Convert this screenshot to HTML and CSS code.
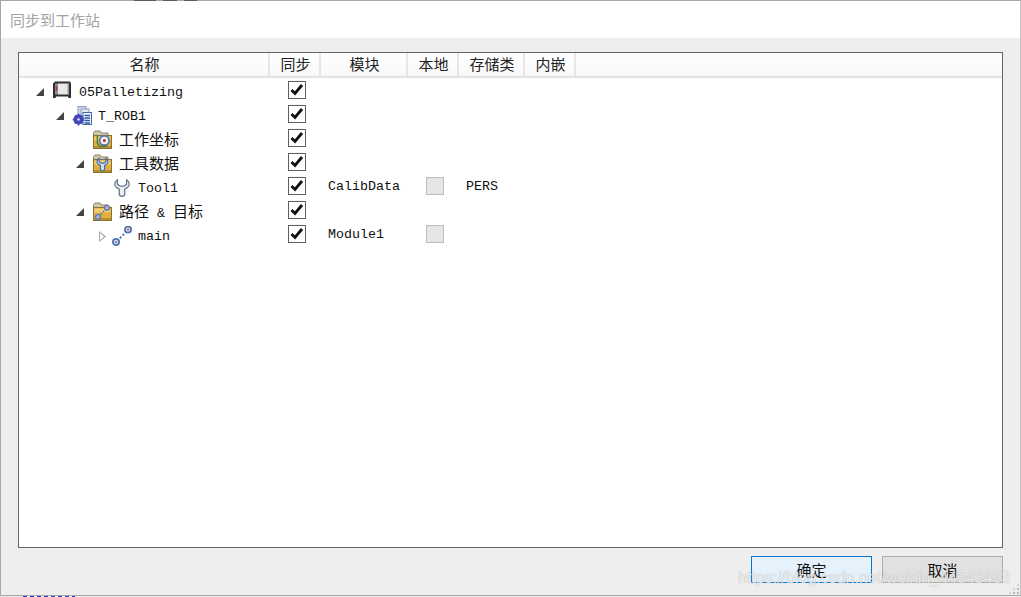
FILE: index.html
```html
<!DOCTYPE html>
<html lang="zh-CN">
<head>
    <meta charset="UTF-8">
    <title>同步到工作站</title>
    <link rel="stylesheet" href="styles.css">
</head>
<body>
    <svg class="defs" width="0" height="0">
        <symbol id="check" viewBox="0 0 16 16">
            <path d="M2.5 8 L6 11.5 L13 3" fill="none" stroke="#111" stroke-width="2.8"/>
        </symbol>
        <symbol id="folder" viewBox="0 0 20 20">
            <path d="M1.5 18.5 V2.5 L3 1 H8 L9.5 3 H16 V6 H18.5 V18.5 Z" fill="#cfc7ac" stroke="#8d8263"/>
            <rect x="1.5" y="5.5" width="18" height="13" fill="#e2ae3c" stroke="#8a7136"/>
            <rect x="2.5" y="6.5" width="16" height="4" fill="#f0cf72"/>
            <rect x="2" y="16" width="17" height="2" fill="#b98c2c"/>
        </symbol>
        <symbol id="wrench" viewBox="0 0 22 20">
            <path d="M6 1 C2.5 3 2 8 5 9.5 C6.5 10.5 8 10.5 8 11.5 V17 C8 20 14 20 14 17 V11.5 C14 10.5 15.5 10.5 17 9.5 C20 8 19.5 3 16 1 V6 L13 8 H9 L6 6 Z" fill="#eaeff5" stroke="#64748c" stroke-width="1.4"/>
        </symbol>
        <symbol id="folder-wrench" viewBox="0 0 22 20">
            <path d="M6 1 C2.5 3 2 8 5 9.5 C6.5 10.5 8 10.5 8 11.5 V17 C8 20 14 20 14 17 V11.5 C14 10.5 15.5 10.5 17 9.5 C20 8 19.5 3 16 1 V6 L13 8 H9 L6 6 Z" fill="#d5e2f4" stroke="#3f6eb0" stroke-width="1.8"/>
        </symbol>
        <symbol id="path" viewBox="0 0 20 20">
            <path d="M5 15 L15 5" stroke="#4a76b8" stroke-width="2" stroke-dasharray="2 2"/>
            <circle cx="4" cy="16" r="3.1" fill="#d2def0" stroke="#4a76b8" stroke-width="1.8"/>
            <circle cx="16" cy="3.5" r="3.1" fill="#e9d5d6" stroke="#4a76b8" stroke-width="1.8"/>
            <circle cx="4" cy="16" r="1" fill="#b8575a"/>
            <circle cx="16" cy="3.5" r="1" fill="#b8575a"/>
        </symbol>
    </svg>

    <div class="top-bleed">
        <span class="bleed-a"></span><span class="bleed-b"></span><span class="bleed-c"></span>
    </div>
    <div class="bottom-bleed"></div>

    <div class="dialog">
        <div class="dialog-title">同步到工作站</div>

        <div class="dialog-body">
            <div class="tree-table">
                <div class="table-row table-head">
                    <div class="head-cell">名称</div>
                    <div class="head-cell">同步</div>
                    <div class="head-cell">模块</div>
                    <div class="head-cell">本地</div>
                    <div class="head-cell">存储类</div>
                    <div class="head-cell">内嵌</div>
                </div>

                <div class="table-row">
                    <div class="name-cell level-0">
                        <span class="toggle open"></span>
                        <svg class="node-icon safe-icon" viewBox="0 0 20 20">
                            <path d="M1 17 V2.5 L3 0.5 H18 L19 2.5 V17 H16.5 L16 15.5 H4 L3.5 17 Z" fill="#2e2e2e"/>
                            <rect x="6" y="2.5" width="11" height="11" fill="#e8e8e8"/>
                            <rect x="15.5" y="2.5" width="1.5" height="11" fill="#9a9a9a"/>
                            <rect x="3" y="2.5" width="3" height="11" fill="#8c8c8c"/>
                            <rect x="3.8" y="5.5" width="1.4" height="4" fill="#b02a2a"/>
                        </svg>
                        <span class="label">05Palletizing</span>
                    </div>
                    <div class="check-cell"><span class="check"><svg><use href="#check"/></svg></span></div>
                </div>

                <div class="table-row">
                    <div class="name-cell level-1">
                        <span class="toggle open"></span>
                        <svg class="node-icon" viewBox="0 0 20 20">
                            <rect x="6" y="0.5" width="8" height="10" fill="#cfd9ea" stroke="#8b9dbb"/>
                            <rect x="9" y="3" width="8" height="10" fill="#dfe6f2" stroke="#8b9dbb"/>
                            <rect x="11" y="6.5" width="8.5" height="12" fill="#f4f7fb" stroke="#3f68a8"/>
                            <path d="M12.5 9.5 H18 M12.5 12 H18 M12.5 14.5 H18 M12.5 17 H18" stroke="#2d5aa0" stroke-width="1.3"/>
                            <circle cx="6.5" cy="13.5" r="3.6" fill="none" stroke="#4347b5" stroke-width="2.8"/>
                            <path d="M6.5 7.8 V19.5 M0.8 13.5 H12.2 M2.7 9.7 L10.3 17.3 M10.3 9.7 L2.7 17.3" stroke="#4347b5" stroke-width="1.8"/>
                            <circle cx="6.5" cy="13.5" r="1.3" fill="#d8dcf2"/>
                        </svg>
                        <span class="label tight">T_ROB1</span>
                    </div>
                    <div class="check-cell"><span class="check"><svg><use href="#check"/></svg></span></div>
                </div>

                <div class="table-row">
                    <div class="name-cell level-2">
                        <span class="toggle"></span>
                        <span class="folder-icon">
                            <svg class="node-icon"><use href="#folder"/></svg>
                            <svg class="folder-badge" viewBox="0 0 16 14">
                                <circle cx="10" cy="7" r="5" fill="#f2f2f2" stroke="#5579ad" stroke-width="1.8"/>
                                <circle cx="10" cy="7" r="1.7" fill="#b33a3a"/>
                                <path d="M2.5 2 V10 L5 13 H13" fill="none" stroke="#3f7f3f" stroke-width="1.5"/>
                            </svg>
                        </span>
                        <span class="label cjk">工作坐标</span>
                    </div>
                    <div class="check-cell"><span class="check"><svg><use href="#check"/></svg></span></div>
                </div>

                <div class="table-row">
                    <div class="name-cell level-2">
                        <span class="toggle open"></span>
                        <span class="folder-icon">
                            <svg class="node-icon"><use href="#folder"/></svg>
                            <svg class="folder-badge"><use href="#folder-wrench"/></svg>
                        </span>
                        <span class="label cjk">工具数据</span>
                    </div>
                    <div class="check-cell"><span class="check"><svg><use href="#check"/></svg></span></div>
                </div>

                <div class="table-row">
                    <div class="name-cell level-3">
                        <span class="toggle"></span>
                        <svg class="node-icon"><use href="#wrench"/></svg>
                        <span class="label tight">Tool1</span>
                    </div>
                    <div class="check-cell"><span class="check"><svg><use href="#check"/></svg></span></div>
                    <div class="text-cell">CalibData</div>
                    <div class="check-cell"><span class="check disabled"></span></div>
                    <div class="text-cell">PERS</div>
                </div>

                <div class="table-row">
                    <div class="name-cell level-2">
                        <span class="toggle open"></span>
                        <span class="folder-icon">
                            <svg class="node-icon"><use href="#folder"/></svg>
                            <svg class="folder-badge"><use href="#path"/></svg>
                        </span>
                        <span class="label mixed"><span class="cjk">路径</span> &amp; <span class="cjk">目标</span></span>
                    </div>
                    <div class="check-cell"><span class="check"><svg><use href="#check"/></svg></span></div>
                </div>

                <div class="table-row">
                    <div class="name-cell level-3">
                        <span class="toggle closed"></span>
                        <svg class="node-icon"><use href="#path"/></svg>
                        <span class="label tight">main</span>
                    </div>
                    <div class="check-cell"><span class="check"><svg><use href="#check"/></svg></span></div>
                    <div class="text-cell">Module1</div>
                    <div class="check-cell"><span class="check disabled"></span></div>
                    <div class="text-cell"></div>
                </div>
            </div>

            <div class="dialog-footer">
                <button class="btn btn-default">确定</button>
                <button class="btn">取消</button>
            </div>
        </div>

        <span class="grip"></span>
        <div class="watermark">https://blog.csdn.net/weixin_44543463</div>
    </div>
</body>
</html>
```

FILE: styles.css
```css
* {
    box-sizing: border-box;
}

body {
    margin: 0;
    width: 1021px;
    height: 597px;
    overflow: hidden;
    position: relative;
    background-color: #eeeeee;
    font-family: 'Liberation Mono', 'Noto Sans CJK SC', monospace;
    font-size: 13.33px;
    color: #111;
}

.defs {
    position: absolute;
}

.top-bleed span {
    position: absolute;
    top: 0;
    height: 1px;
    background-color: #5a5a5a;
    z-index: 2;
}

.bleed-a { left: 134px; width: 22px; }
.bleed-b { left: 163px; width: 14px; }
.bleed-c { left: 184px; width: 13px; }

.bottom-bleed {
    position: absolute;
    left: 23px;
    bottom: 0;
    width: 52px;
    height: 1px;
    background: repeating-linear-gradient(90deg, #2a3fd0 0 4px, #ffffff 4px 7px);
    z-index: 2;
}

.dialog {
    position: relative;
    display: flex;
    flex-direction: column;
    width: 1021px;
    height: 596px;
    border: 1px solid #a6a6a6;
    border-right-color: #c4c4c4;
}

.dialog-title {
    height: 37px;
    flex-shrink: 0;
    padding-left: 9px;
    line-height: 37px;
    background-color: white;
    color: #a3a3a3;
    font-family: 'Noto Sans CJK SC', sans-serif;
    font-size: 15px;
}

.dialog-body {
    flex: 1;
    display: flex;
    flex-direction: column;
    padding: 14px 17px 0;
}

.tree-table {
    height: 496px;
    border: 1px solid #646464;
    background-color: white;
}

.table-row {
    display: grid;
    grid-template-columns: 251px 51px 87px 51px 66px 51px;
    height: 24px;
    align-items: center;
}

.table-head {
    height: 25px;
    border-bottom: 2px solid #e3e3e3;
    background: linear-gradient(#ffffff, #f8f8f8);
    align-items: stretch;
}

.head-cell {
    border-right: 2px solid #e6e6e6;
    padding-left: 2px;
    line-height: 22px;
    text-align: center;
    font-family: 'Noto Sans CJK SC', sans-serif;
    font-size: 15px;
    color: #222;
}

.name-cell {
    display: flex;
    align-items: center;
    padding-top: 4px;
}

.level-0 { padding-left: 17px; }
.level-1 { padding-left: 37px; }
.level-2 { padding-left: 57px; }
.level-3 { padding-left: 77px; }

.toggle {
    position: relative;
    width: 16px;
    height: 16px;
    flex-shrink: 0;
}

.toggle.open::after {
    content: "";
    position: absolute;
    left: 0;
    top: 4px;
    width: 0;
    height: 0;
    border-bottom: 8px solid #444;
    border-left: 8px solid transparent;
}

.toggle.closed::after {
    content: "";
    position: absolute;
    left: 3px;
    top: 3px;
    width: 7px;
    height: 11px;
    background-color: #a6a6a6;
    clip-path: polygon(0 0, 100% 50%, 0 100%, 0 0, 1px 2px, 1px 9px, 5px 50%, 1px 2px);
}

.node-icon {
    display: block;
    width: 20px;
    height: 20px;
    flex-shrink: 0;
}

.safe-icon {
    margin-top: -3px;
}

.folder-icon {
    position: relative;
    width: 20px;
    height: 20px;
    flex-shrink: 0;
}

.folder-badge {
    position: absolute;
    left: 3px;
    top: 3px;
    width: 15px;
    height: 15px;
}

.label {
    margin-left: 7px;
    white-space: nowrap;
}

.label.tight {
    margin-left: 6px;
}

.label.cjk,
.label.mixed {
    margin-top: -4px;
}

.cjk {
    font-family: 'Noto Sans CJK SC', sans-serif;
    font-size: 15px;
}

.check-cell {
    display: flex;
    justify-content: center;
    padding-left: 3px;
}

.check {
    display: block;
    width: 18px;
    height: 18px;
    border: 1px solid #5f5f5f;
    background-color: white;
}

.check svg {
    display: block;
    width: 16px;
    height: 16px;
}

.check.disabled {
    border-color: #bcbcbc;
    background-color: #e6e6e6;
}

.text-cell {
    padding-left: 7px;
    white-space: nowrap;
}

.dialog-footer {
    display: flex;
    justify-content: flex-end;
    gap: 10px;
    margin-top: 8px;
}

.btn {
    width: 121px;
    height: 27px;
    padding: 0;
    border: 1px solid #adadad;
    background-color: #e1e1e1;
    font-family: 'Noto Sans CJK SC', sans-serif;
    font-size: 15px;
    color: #111;
}

.btn-default {
    border-color: #0078d7;
    background-color: #e5f1fb;
}

.grip {
    position: absolute;
    right: 1px;
    bottom: 1px;
    width: 10px;
    height: 10px;
    background-image: radial-gradient(circle at 1px 1px, #b5b5b5 1px, transparent 1.2px);
    background-size: 4px 4px;
    clip-path: polygon(100% 0, 100% 100%, 0 100%);
}

.watermark {
    position: absolute;
    left: 737px;
    top: 568px;
    font-family: 'Liberation Sans', sans-serif;
    font-size: 16px;
    color: rgba(255, 255, 255, 0.75);
    text-shadow: 0 0 1px rgba(110, 110, 110, 0.6);
    white-space: nowrap;
}
```
